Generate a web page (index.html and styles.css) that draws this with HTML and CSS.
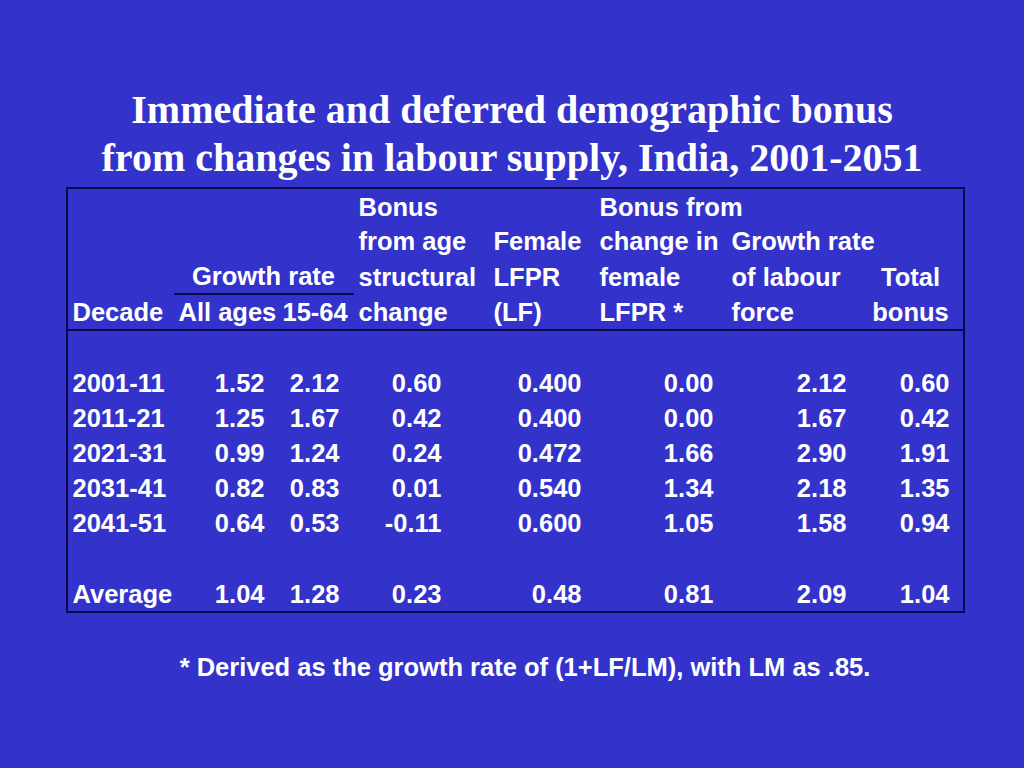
FILE: index.html
```html
<!DOCTYPE html>
<html>
<head>
<meta charset="utf-8">
<link rel="stylesheet" href="styles.css">
</head>
<body>
<div class="slide">
  <h1 class="title">Immediate and deferred demographic bonus<br>from changes in labour supply, India, 2001-2051</h1>
  <table class="data">
    <colgroup>
      <col class="c1"><col class="c2"><col class="c3"><col class="c4"><col class="c5"><col class="c6"><col class="c7"><col class="c8">
    </colgroup>
    <thead>
      <tr class="first">
        <th></th><th></th><th></th><th>Bonus</th><th></th><th>Bonus from</th><th></th><th></th>
      </tr>
      <tr>
        <th></th><th></th><th></th><th>from age</th><th>Female</th><th>change in</th><th>Growth rate</th><th></th>
      </tr>
      <tr class="third">
        <th></th><th colspan="2" class="grp">Growth rate</th><th>structural</th><th>LFPR</th><th>female</th><th>of labour</th><th class="ctr">Total</th>
      </tr>
      <tr class="last">
        <th>Decade</th><th>All ages</th><th class="h3">15-64</th><th>change</th><th>(LF)</th><th>LFPR *</th><th>force</th><th class="ctr">bonus</th>
      </tr>
    </thead>
    <tbody>
      <tr class="blank"><td colspan="8"></td></tr>
      <tr><td>2001-11</td><td>1.52</td><td>2.12</td><td>0.60</td><td>0.400</td><td>0.00</td><td>2.12</td><td>0.60</td></tr>
      <tr><td>2011-21</td><td>1.25</td><td>1.67</td><td>0.42</td><td>0.400</td><td>0.00</td><td>1.67</td><td>0.42</td></tr>
      <tr><td>2021-31</td><td>0.99</td><td>1.24</td><td>0.24</td><td>0.472</td><td>1.66</td><td>2.90</td><td>1.91</td></tr>
      <tr><td>2031-41</td><td>0.82</td><td>0.83</td><td>0.01</td><td>0.540</td><td>1.34</td><td>2.18</td><td>1.35</td></tr>
      <tr><td>2041-51</td><td>0.64</td><td>0.53</td><td>-0.11</td><td>0.600</td><td>1.05</td><td>1.58</td><td>0.94</td></tr>
      <tr class="blank"><td colspan="8"></td></tr>
      <tr class="avg"><td>Average</td><td>1.04</td><td>1.28</td><td>0.23</td><td>0.48</td><td>0.81</td><td>2.09</td><td>1.04</td></tr>
    </tbody>
  </table>
  <p class="note">* Derived as the growth rate of (1+LF/LM), with LM as .85.</p>
</div>
</body>
</html>
```
FILE: styles.css
```css
html, body {
  margin: 0;
  padding: 0;
  background: #3333cc;
}
.slide {
  width: 1024px;
  height: 768px;
  background: #3333cc;
  color: #ffffff;
  display: flex;
  flex-direction: column;
  align-items: center;
  overflow: hidden;
}
.title {
  margin: 86px 0 0 0;
  font-family: "Liberation Serif", "Times New Roman", serif;
  font-weight: bold;
  font-size: 40px;
  line-height: 48px;
  text-align: center;
  white-space: nowrap;
}
.data {
  margin-top: 5px;
  margin-left: 6px;
  width: 897px;
  table-layout: fixed;
  border-collapse: collapse;
  border: 2px solid #0a0a4a;
  font-family: "Liberation Sans", Arial, sans-serif;
  font-weight: bold;
  font-size: 25.5px;
  color: #ffffff;
}
.c1 { width: 107px; }
.c2 { width: 100px; }
.c3 { width: 80px; }
.c4 { width: 135px; }
.c5 { width: 106px; }
.c6 { width: 132px; }
.c7 { width: 134px; }
.c8 { width: 103px; }
.data th, .data td {
  height: 35px;
  padding: 0;
  line-height: 35px;
  white-space: nowrap;
  overflow: visible;
}
.data tr.first th {
  height: 33px;
  padding-top: 2px;
  line-height: 33px;
}
.data tr.third th {
  height: 34px;
  line-height: 34px;
}
.data tr.last th {
  height: 33px;
  line-height: 33px;
  padding-top: 1px;
}
.data th {
  text-align: left;
  font-weight: bold;
  padding-left: 5px;
}
.data th.h3 { padding-left: 9px; }
.data th.ctr { text-align: center; padding-left: 0; padding-right: 2px; }
.data th.grp {
  text-align: center;
  padding-left: 0;
  border-bottom: 2px solid #0a0a4a;
}
.data tr.last th { border-bottom: 2px solid #0a0a4a; }
.data td { text-align: right; }
.data tr.avg td {
  height: 33px;
  line-height: 33px;
  padding-top: 2px;
}
.data td:nth-child(1) { text-align: left; padding-left: 5px; }
.data td:nth-child(2) { padding-right: 9px; }
.data td:nth-child(3) { padding-right: 14px; }
.data td:nth-child(4) { padding-right: 47px; }
.data td:nth-child(5) { padding-right: 13px; }
.data td:nth-child(6) { padding-right: 13px; }
.data td:nth-child(7) { padding-right: 14px; }
.data td:nth-child(8) { padding-right: 13px; }
.note {
  margin: 39px 0 0 0;
  font-family: "Liberation Sans", Arial, sans-serif;
  font-weight: bold;
  font-size: 25.5px;
  line-height: 30px;
  text-align: center;
  white-space: nowrap;
  transform: translateX(13px);
}
```
